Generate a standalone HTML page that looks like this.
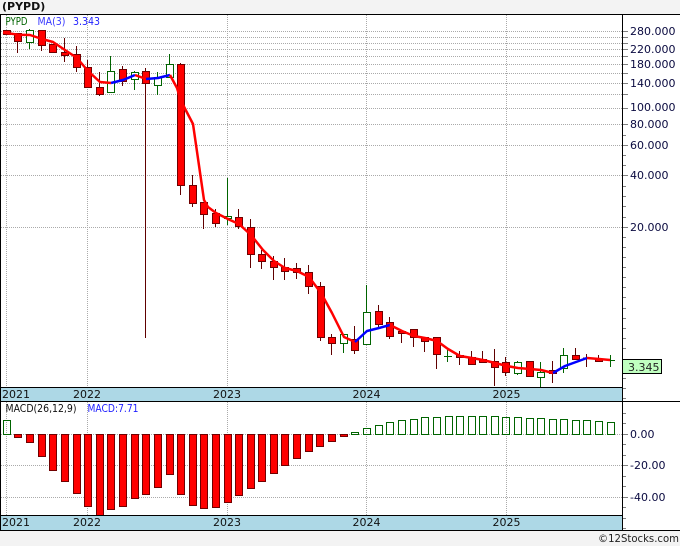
<!DOCTYPE html>
<html>
<head>
<meta charset="utf-8">
<style>
html,body{margin:0;padding:0;background:#f3f3f3;width:680px;height:546px;overflow:hidden}
svg{display:block}
text{font-family:"DejaVu Sans","Liberation Sans",sans-serif;font-size:11px;fill:#111}
.lab text{fill:#0a0a40}
.sm{font-size:10.5px}
</style>
</head>
<body>
<svg width="680" height="546" viewBox="0 0 680 546" xmlns="http://www.w3.org/2000/svg">
<rect x="0" y="14" width="680" height="517" fill="#fff"/>
<rect x="0" y="388" width="622" height="13" fill="#add8e6"/>
<rect x="0" y="516" width="622" height="14" fill="#add8e6"/>

<!-- grid -->
<path fill="none" stroke="#aaaaaa" stroke-dasharray="1 1" d="M1 31.5H622M1 37.5H622M1 43.5H622M1 49.5H622M1 56.5H622M1 64.5H622M1 73.5H622M1 83.5H622M1 94.5H622M1 108.5H622M1 124.5H622M1 145.5H622M1 175.5H622M1 227.5H622M1 434.5H622M1 465.5H622M1 497.5H622
M6.5 15V387M87.5 15V387M227.5 15V387M366.5 15V387M506.5 15V387
M6.5 402V515M87.5 402V515M227.5 402V515M366.5 402V515M506.5 402V515"/>

<!-- axis ticks -->
<path fill="none" stroke="#808080" d="M623 31.5h5M623 37.5h5M623 43.5h5M623 49.5h5M623 56.5h5M623 64.5h5M623 73.5h5M623 83.5h5M623 94.5h5M623 108.5h5M623 124.5h5M623 145.5h5M623 175.5h5M623 227.5h5
M623 135.5h3M623 155.5h3M623 165.5h3M623 186.5h3M623 196.5h3M623 206.5h3M623 217.5h3M623 237.5h3M623 247.5h3M623 257.5h3M623 267.5h3M623 277.5h3M623 287.5h3M623 297.5h3M623 308.5h3M623 318.5h3M623 328.5h3M623 338.5h3M623 348.5h3M623 359.5h3M623 368.5h3M623 378.5h3M623 388.5h3M623 398.5h3
M623 413.5h3M623 423.5h3M623 434.5h5M623 444.5h3M623 455.5h3M623 465.5h5M623 476.5h3M623 486.5h3M623 497.5h5M623 507.5h3M623 518.5h3M623 528.5h3"/>

<!-- wicks -->
<path fill="none" stroke="#600000" d="M17.5 33V53M41.5 30V51M64.5 38V62M76.5 46V72M87.5 60V88M99.5 72V96M122.5 66V86M145.5 68V338M180.5 63V195M192.5 175V207M203.5 202V229M215.5 209V227M238.5 209V229M250.5 219V268M261.5 250V269M273.5 256V280M284.5 258V280M296.5 263V279M308.5 265V294M320.5 282V341M331.5 334V355M354.5 326V354M378.5 305V327M389.5 317V339M401.5 331V343M413.5 329V347M424.5 337V352M436.5 337V369M459.5 351V365M471.5 351V365M482.5 351V363M494.5 349V386M505.5 357V376M529.5 361V376M552.5 361V383M575.5 348V360M586.5 354V367M598.5 355V362"/>
<path fill="none" stroke="#006400" d="M29.5 29V49M110.5 56V92M134.5 71V90M157.5 72V95M169.5 54V77M227.5 178V225M343.5 343V353M366.5 285V344M447.5 350V362M517.5 361V375M540.5 362V387M563.5 348V373M610.5 355V367"/>

<!-- red candle bodies -->
<path fill="#f00" stroke="#700000" d="M3.5 30.5h7v4h-7zM14.5 33.5h7v8h-7zM38.5 30.5h7v15h-7zM49.5 44.5h7v8h-7zM61.5 52.5h7v3h-7zM73.5 54.5h7v13h-7zM84.5 67.5h7v20h-7zM96.5 87.5h7v7h-7zM119.5 69.5h7v12h-7zM142.5 71.5h7v12h-7zM177.5 64.5h7v121h-7zM189.5 185.5h7v18h-7zM200.5 202.5h7v12h-7zM212.5 213.5h7v10h-7zM235.5 217.5h7v9h-7zM247.5 227.5h7v27h-7zM258.5 254.5h7v7h-7zM270.5 261.5h7v6h-7zM281.5 267.5h7v4h-7zM293.5 268.5h7v4h-7zM305.5 272.5h7v14h-7zM317.5 286.5h7v51h-7zM328.5 337.5h7v6h-7zM351.5 339.5h7v11h-7zM375.5 311.5h7v13h-7zM386.5 322.5h7v14h-7zM398.5 331.5h7v2h-7zM410.5 329.5h7v8h-7zM421.5 337.5h7v4h-7zM433.5 337.5h7v17h-7zM456.5 355.5h7v2h-7zM468.5 357.5h7v7h-7zM479.5 359.5h7v3h-7zM491.5 361.5h7v6h-7zM502.5 362.5h7v10h-7zM526.5 361.5h7v15h-7zM549.5 370.5h7v3h-7zM572.5 355.5h7v4h-7zM583.5 358h7v.5h-7zM595.5 359.5h7v2h-7z"/>
<!-- green candle bodies -->
<path fill="#fff" stroke="#006400" d="M26.5 30.5h7v12h-7zM107.5 71.5h7v21h-7zM131.5 72.5h7v7h-7zM154.5 77.5h7v8h-7zM166.5 64.5h7v13h-7zM224.5 216.5h7v2h-7zM340.5 334.5h7v9h-7zM363.5 312.5h7v32h-7zM514.5 362.5h7v11h-7zM537.5 372.5h7v5h-7zM560.5 355.5h7v13h-7z"/>
<path fill="none" stroke="#006400" d="M444 356.5h8M607 360.5h8"/>

<!-- moving average -->
<g fill="none" stroke-width="2.5" stroke-linejoin="round">
<path stroke="#f00" d="M3 32.5L18 34.7L30 35L42 39L53 42L65 50L77 58L88 71L100 82L111 83"/>
<path stroke="#00f" d="M111 83L123 80L135 75"/>
<path stroke="#f00" d="M135 75L146 79"/>
<path stroke="#00f" d="M146 79L158 78L170 75"/>
<path stroke="#f00" d="M170 75L177 88L181 101L193 124L204 200L208 207L216 213L230 220L239 224L251 235L263 250L274 261L285 268L297 271L309 277L321 293L332 313L344 337L355 342"/>
<path stroke="#00f" d="M355 342L367 331L379 328L390 325"/>
<path stroke="#f00" d="M390 325L402 331L414 336L425 338L437 341L448 349L460 356L472 358L483 360L495 363L507 366L518 368L530 369L541 370L553 373"/>
<path stroke="#00f" d="M553 373L565 366L576 362L587 358"/>
<path stroke="#f00" d="M587 358L599 359L610 360"/>
</g>

<!-- MACD red bars -->
<path fill="#f00" stroke="#700000" d="M14.5 434.5h7v3h-7zM26.5 434.5h7v8h-7zM38.5 434.5h7v22h-7zM49.5 434.5h7v36h-7zM61.5 434.5h7v47h-7zM73.5 434.5h7v59h-7zM84.5 434.5h7v72h-7zM96.5 434.5h7v81h-7zM107.5 434.5h7v75h-7zM119.5 434.5h7v72h-7zM131.5 434.5h7v64h-7zM142.5 434.5h7v60h-7zM154.5 434.5h7v53h-7zM166.5 434.5h7v40h-7zM177.5 434.5h7v60h-7zM189.5 434.5h7v71h-7zM200.5 434.5h7v74h-7zM212.5 434.5h7v73h-7zM224.5 434.5h7v68h-7zM235.5 434.5h7v61h-7zM247.5 434.5h7v54h-7zM258.5 434.5h7v47h-7zM270.5 434.5h7v39h-7zM281.5 434.5h7v31h-7zM293.5 434.5h7v24h-7zM305.5 434.5h7v17h-7zM316.5 434.5h7v12h-7zM328.5 434.5h7v7h-7zM340.5 434.5h7v2h-7z"/>
<!-- MACD green bars -->
<path fill="none" stroke="#006400" d="M3.5 420.5h7v14h-7zM351.5 432.5h7v2h-7zM363.5 428.5h7v6h-7zM375.5 425.5h7v9h-7zM386.5 422.5h7v12h-7zM398.5 420.5h7v14h-7zM410.5 419.5h7v15h-7zM421.5 417.5h7v17h-7zM433.5 417.5h7v17h-7zM445.5 416.5h7v18h-7zM456.5 416.5h7v18h-7zM468.5 416.5h7v18h-7zM479.5 416.5h7v18h-7zM491.5 416.5h7v18h-7zM502.5 417.5h7v17h-7zM514.5 417.5h7v17h-7zM526.5 418.5h7v16h-7zM537.5 418.5h7v16h-7zM549.5 419.5h7v15h-7zM560.5 419.5h7v15h-7zM572.5 420.5h7v14h-7zM583.5 420.5h7v14h-7zM595.5 421.5h7v13h-7zM607.5 422.5h7v12h-7z"/>

<!-- frame -->
<path fill="none" stroke="#000" d="M0 14.5H680M0 387.5H622M0 401.5H680M0 515.5H622M0 530.5H680M.5 14V531M622.5 14V531"/>

<!-- labels -->
<text x="2" y="10" style="font-weight:bold">(PYPD)</text>
<text x="5.5" y="25" class="sm" style="fill:#006400" textLength="22" lengthAdjust="spacingAndGlyphs">PYPD</text>
<text x="37.5" y="25" class="sm" style="fill:#3a3aff" textLength="28" lengthAdjust="spacingAndGlyphs">MA(3)</text>
<text x="73" y="25" class="sm" style="fill:#2020ff" textLength="27" lengthAdjust="spacingAndGlyphs">3.343</text>
<text x="5.5" y="412" class="sm" style="fill:#111" textLength="71" lengthAdjust="spacingAndGlyphs">MACD(26,12,9)</text>
<text x="87.5" y="412" class="sm" style="fill:#2020ff" textLength="51" lengthAdjust="spacingAndGlyphs">MACD:7.71</text>

<g class="lab">
<text x="630" y="35">280.000</text>
<text x="630" y="53">220.000</text>
<text x="630" y="68">180.000</text>
<text x="630" y="87">140.000</text>
<text x="630" y="111">100.000</text>
<text x="630" y="128">80.000</text>
<text x="630" y="149">60.000</text>
<text x="630" y="179">40.000</text>
<text x="630" y="231">20.000</text>
<text x="630" y="438">0.00</text>
<text x="630" y="469">-20.00</text>
<text x="630" y="501">-40.00</text>
</g>

<rect x="622.5" y="359.5" width="39" height="14" fill="#c0ffc0" stroke="#000"/>
<text x="628" y="371" style="fill:#222">3.345</text>

<text x="2" y="398">2021</text>
<text x="73" y="398">2022</text>
<text x="213" y="398">2023</text>
<text x="352.5" y="398">2024</text>
<text x="492.5" y="398">2025</text>
<text x="2" y="526">2021</text>
<text x="73" y="526">2022</text>
<text x="213" y="526">2023</text>
<text x="352.5" y="526">2024</text>
<text x="492.5" y="526">2025</text>

<text x="598" y="542" style="font-size:11px;fill:#222" textLength="81" lengthAdjust="spacingAndGlyphs">©12Stocks.com</text>
</svg>
</body>
</html>
